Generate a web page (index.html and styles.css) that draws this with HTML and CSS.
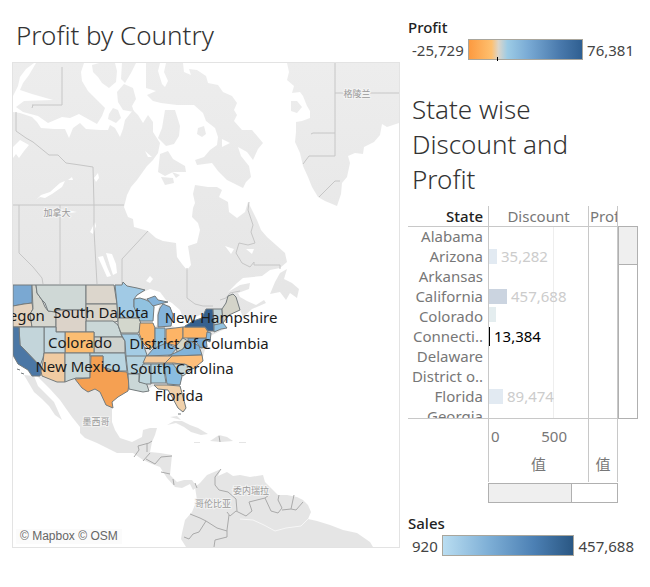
FILE: index.html
```html
<!DOCTYPE html>
<html lang="en">
<head>
<meta charset="utf-8">
<title>Profit by Country</title>
<link rel="stylesheet" href="styles.css">
</head>
<body>
<main class="dashboard">
  <section class="map-panel">
    <h1 class="title">Profit by Country</h1>
    <figure class="map">
      <svg viewBox="13 63 386 484" aria-label="Profit by state">
        <defs>
          <linearGradient id="land" gradientUnits="userSpaceOnUse" x1="0" y1="62" x2="0" y2="320">
            <stop offset="0" stop-color="#ededed"/><stop offset="1" stop-color="#e5e5e5"/>
          </linearGradient>
        </defs>
        <g class="land">
          <!-- North American mainland -->
          <path d="M13 112L20 113 32 117 37 122 41 128 54 129 65 129 69 138 73 128 80 123 86 129 100 130 108 130 110 125 115 128 120 137 123 129 125 120 133 110 138 115 143 123 148 115 153 122 153 132 160 143 158 153 153 160 147 166 142 173 137 180 131 187 127 195 124 207 128 217 133 219 134 227 148 231 156 238 163 241 176 243 177 257 182 264 187 270 191 265 188 246 197 243 200 230 198 223 192 217 193 208 195 203 193 194 195 185 208 187 217 187 222 190 219 197 228 202 229 212 237 218 245 212 248 202 257 220 261 230 267 237 285 253 287 262 280 268 270 270 262 276 243 278 237 283 228 292 240 285 250 283 249 289 238 293 240 297 247 301 256 305 264 300 266 303 252 309 243 317 240 310 229 315 222 323 227 328 210 336 206 345 203 357 202 362 190 370 183 376 180 385 183 397 186 408 184 412 180 409 173 397 168 389 158 388 153 386 145 391 133 390 128 390 118 397 112 402 112 413 112 422 115 430 120 438 132 442 142 437 143 430 150 428 157 428 155 435 152 442 150 452 160 453 172 455 171 465 170 475 177 482 184 480 192 480 197 487 193 490 190 484 182 488 175 487 167 478 160 467 152 464 143 460 133 453 117 453 97 443 85 438 80 433 80 427 72 417 67 410 60 400 50 389 42 381 35 374 28 370 18 364 13 357Z"/>
          <path d="M24 375L34 376 38 386 46 394 54 402 62 420 55 415 49 406 42 399 34 392Z"/>
          <!-- Arctic islands -->
          <path d="M13 63H34L26 69 20 77 18 86 13 96Z"/>
          <path d="M36 63H84L81 72 82 81 88 91 97 100 105 108 102 116 97 124 88 119 79 114 70 118 62 117 48 123 38 116 23 112 16 107 24 101 53 100 32 94 20 90 23 83 29 75Z"/>
          <path d="M92 65L99 63H115L117 71 116 82 109 88 102 83 98 77 93 72Z"/>
          <path d="M122 63H136L131 73 125 83 121 79Z"/>
          <path d="M124 84L133 88 136 99 132 106 134 112 123 110 118 102 117 92Z"/>
          <path d="M109 114L113 108 118 110 121 118 116 123 108 119Z"/>
          <path d="M146 63H160L158 71 162 84 165 87 168 81 164 72 166 63H183L184 72 191 75 189 69 197 70 206 76 208 83 218 85 223 92 232 96 237 103 234 110 237 115 234 121 242 130 252 130 263 143 258 149 253 160 247 152 238 147 241 156 249 166 251 177 246 182 243 188 235 184 227 180 218 171 212 163 197 165 195 160 204 157 210 150 217 145 218 137 215 128 206 121 203 113 194 105 184 105 177 105 161 103 153 101 147 95 156 91 146 88Z"/>
          <path d="M165 110L175 110 180 126 179 136 174 144 166 146 158 138 162 128Z"/>
          <path d="M160 154L168 151 173 159 185 166 186 172 173 172 165 176 158 172Z"/>
          <path d="M198 128L204 126 206 134 202 137 197 134Z"/>
          <path d="M161 177L173 178 174 183 165 185Z"/>
          <path d="M172 172L180 175 176 178Z"/>
          <path d="M203 84L198 87 202 90Z"/>
          <path d="M270 294L275 282 280 273 287 269 284 279 292 283 299 289 297 298 290 293 286 300 280 292Z"/>
          <!-- Greenland -->
          <path d="M287 63L289 72 287 80 294 86 292 93 300 92 303 96 307 106 310 111 310 118 302 121 296 122 296 132 295 142 300 153 303 166 308 177 312 187 318 197 325 201 337 206 341 194 342 183 347 177 350 163 348 156 355 153 363 154 364 147 374 142 380 135 382 124 387 127 399 123V63Z"/>
          <path d="M291 101L297 101 302 107 297 113 291 111Z"/>
          <!-- Caribbean -->
          <path d="M167 425L174 421 182 421 190 425 198 428 208 434 201 435 191 432 184 427 176 423Z"/>
          <path d="M210 441L219 435 227 437 233 441 221 442Z"/>
          <path d="M194 442H200V443H194ZM239 442H246V443H239ZM170 417L181 420 177 416Z"/>
          <!-- South America -->
          <path d="M186 547L181 539 182 533 185 520 192 512 197 500 195 487 200 483 207 475 221 469 218 476 227 472 233 476 240 475 250 477 263 475 265 482 278 495 287 495 297 497 303 500 308 505 311 512 308 519 317 521 330 525 343 530 357 533 370 542 373 547Z"/>
        </g>
        <!-- Lakes -->
        <g class="water">
          <path d="M36 200L41 195 50 192 60 183 65 181 62 187 52 194 45 198 40 197Z"/>
          <path d="M13 147L20 140 29 145 24 151 19 158 16 154 13 158Z"/>
          <path d="M94 178L98 173 99 178 96 182Z"/>
          <path d="M95 222L90 232 93 234 96 226ZM98 257L103 256 107 267 111 276 107 277 103 268ZM106 253L112 254 116 264 117 273 113 275 110 266ZM66 210L77 212 70 213Z"/>
          <path d="M72 177L68 180 73 180ZM145 151L152 157 148 157ZM222 139L230 143 222 147ZM225 246L234 249 231 254ZM246 249L254 249 252 254Z"/>
          <path d="M146 281L150 276 153 279 150 283Z"/>
          <path d="M134 298L141 293 150 289 160 292 166 300 172 303 180 310 183 318 190 321 193 320 188 325 177 329 171 325 173 315 169 305 160 304 157 313 157 325 153 328 152 316 155 306 158 301 147 298 140 298Z"/>
          <path d="M190 319L200 315 206 315 203 319 192 322Z"/>
        </g>
        <path class="river" d="M240 519L253 520 264 525 275 531 286 528 301 526 308 519"/>
        <g class="borders">
          <path d="M62 67V105H32M32 108L33 105M16 112V131L26 138 33 142 49 155H58L66 163 80 165 93 167 94 205 94 230 97 284M13 205H124M19 205V253L33 267 42 278 43 284M60 205V284M148 231L122 259V284M187 268V298L195 304 203 306 213 306M335 63V156H309L303 164M311 134L313 133H335M335 93H399M319 197L335 181H340"/>
          <path d="M249 202L248 210 253 225 251 232 255 243 248 245 239 243 236 253 242 263 250 267 254 262 254 265H280V269M220 300L226 298 230 293 240 291"/>
        </g>
        <g class="borders borders-dark">
          <path d="M134 457L139 450 138 446 149 443 152 441M147 443V452M143 461L150 453M146 459L155 464M155 464L161 457 172 456M161 472L170 474M173 479L174 485M195 483L197 488M219 436L220 442"/>
          <path d="M221 469L215 477 215 485 219 490 228 492 236 499 237 511M190 514L200 518 206 521 217 528 227 531M227 512L230 516 236 511 246 516 252 511 249 502 265 498 269 495M265 498L271 511 278 513 282 508 278 500 279 495M282 510L291 509 294 495M291 509L296 510 303 502M206 521L199 532 193 534 189 539 184 537M229 515L227 530 227 537 215 540 214 547"/>
        </g>
        <!-- States, coloured by profit -->
        <g class="states">
          <path fill="#7aa8d2" d="M13 285H32V303L24 304 13 306Z"/>
          <path fill="#e5d3bf" d="M13 306L24 304 32 303 33 309 30 314 32 327H13Z"/>
          <path fill="#d6d7d0" d="M32 285H36L37 293 42 300 45 307 48 311 56 312V327H32L30 314 33 309Z"/>
          <path fill="#cfd8d6" d="M36 285H86V310H56V312L48 311 45 303 42 300 37 293Z"/>
          <path fill="#dcd6cc" d="M86 285H114L117 304H86Z"/>
          <path fill="#d9d5ca" d="M86 304H117L118 321 115 322H86Z"/>
          <path fill="#dcd3c9" d="M56 310H86V332H56Z"/>
          <path fill="#cad7d7" d="M86 321H113L118 325 122 337H94V332H86Z"/>
          <path fill="#cfd2cd" d="M94 337H122L125 341V353H94Z"/>
          <path fill="#fbbd72" d="M65 332H94V353H65Z"/>
          <path fill="#c3d7df" d="M44 327H56V332H65V353H44Z"/>
          <path fill="#c3d5da" d="M19 327H44V353L43 358 40 366 20 345Z"/>
          <path fill="#4b77a5" d="M13 327H19L20 345 40 366 42 371 40 376H32L28 370 18 364 13 355Z"/>
          <path fill="#f0cba2" d="M44 353H65V382H57L42 376 41 371 43 362Z"/>
          <path fill="#c9d7d8" d="M65 353H90V378H76L70 380 65 382Z"/>
          <path fill="#b9d5e0" d="M90 353H125L127 371 115 371 103 367V356H90Z"/>
          <path fill="#f5a052" d="M91 356H103V367L108 370 115 371 127 372 129 383 128 391 118 397 112 402 113 408 106 405 100 392 95 389 88 392 82 388 75 379 90 378Z"/>
          <path fill="#a1cae5" d="M115 285H122L123 282 127 286 137 288 145 290 137 295 134 299 134 307 140 314V318H118L117 304Z"/>
          <path fill="#d3d7cd" d="M118 318H139L142 327 138 333H121L118 325Z"/>
          <path fill="#a4cce4" d="M121 334H138L143 344 147 355 145 357H126L125 341Z"/>
          <path fill="#b5d3df" d="M126 356H147L143 367 140 374H128Z"/>
          <path fill="#cad7d7" d="M128 374H139V382H146L149 391 143 392 129 389Z"/>
          <path fill="#bed5dc" d="M143 364H151V384H146L139 382 140 372Z"/>
          <path fill="#91c2e0" d="M134 299L140 298 146 300 152 303 154 307 153 321H140L134 307Z"/>
          <path fill="#fdb466" d="M140 323H153L155 328 155 343 150 350 143 343 139 333Z"/>
          <path fill="#84b3da" d="M147 299L155 296 158 300 168 302 160 304 153 306ZM160 308L163 304 170 307 173 315 171 326 158 327 158 315Z"/>
          <path fill="#91c2e0" d="M155 328H165V345L155 350Z"/>
          <path fill="#fdb466" d="M166 329L175 328 183 327V337L177 346 166 343Z"/>
          <path fill="#89b9dd" d="M147 356L153 349 166 343 177 348 171 355Z"/>
          <path fill="#d5d6c8" d="M176 346L183 338 188 341 182 350 177 352Z"/>
          <path fill="#80b3da" d="M168 356L177 352 183 349 190 341 199 346 202 355Z"/>
          <path fill="#79aad4" d="M188 338H206L207 347 201 348 196 342 188 341Z"/>
          <path fill="#f4c99b" d="M146 356H172L166 363H143Z"/>
          <path fill="#fdbf7b" d="M172 356L202 355 203 361 193 369 187 365 174 363H165Z"/>
          <path fill="#c8d7d7" d="M172 364H185L192 369 183 376Z"/>
          <path fill="#8abde0" d="M164 364H173L182 376 180 385 167 384Z"/>
          <path fill="#aacfdf" d="M151 364H163L166 383H151Z"/>
          <path fill="#fdb466" d="M183 327H205L208 332 206 338H183Z"/>
          <path fill="#36618f" d="M185 326L193 321 202 318 206 309H213L214 331 208 331 205 327H185Z"/>
          <path fill="#c2d5d9" d="M213 309H222L223 324 214 325Z"/>
          <path fill="#d4d4c9" d="M222 309L226 303 228 296 233 294 236 297 240 310 229 315 223 323Z"/>
          <path fill="#91c2e0" d="M214 325L223 323 227 328 221 329 214 332Z"/>
          <path fill="#89b9dd" d="M207 332L211 333 210 342 206 340Z"/>
          <path fill="#f0d0aa" d="M154 385L167 385 180 386 183 397 186 408 183 412 178 408 172 397 168 390 158 389Z"/>
          <path fill="none" d="M17 369L20 370M21 373L24 374M181 414L178 414"/>
        </g>
        <g class="places">
          <text x="357" y="97">格陵兰</text>
          <text x="57" y="216">加拿大</text>
          <text x="96" y="425">墨西哥</text>
          <text x="251" y="494">委内瑞拉</text>
          <text x="213" y="507">哥伦比亚</text>
        </g>
        <g class="names">
          <text x="18" y="321">Oregon</text>
          <text x="101" y="318">South Dakota</text>
          <text x="80" y="348">Colorado</text>
          <text x="78" y="372">New Mexico</text>
          <text x="221" y="323">New Hampshire</text>
          <text x="199" y="349">District of Columbia</text>
          <text x="182" y="374">South Carolina</text>
          <text x="179" y="401">Florida</text>
        </g>
      </svg>
      <figcaption class="credit">© Mapbox © OSM</figcaption>
    </figure>
  </section>

  <aside class="side">
    <section class="legend">
      <h2 class="legend-title">Profit</h2>
      <div class="legend-row"><span>-25,729</span><div class="ramp ramp-profit"></div><span>76,381</span></div>
    </section>

    <section class="chart">
      <h2 class="title">State wise Discount and Profit</h2>
      <div class="viz">
        <div class="viewport">
          <table>
            <thead>
              <tr><th class="state">State</th><th class="discount">Discount</th><th class="profit">Profit</th></tr>
            </thead>
            <tbody>
              <tr><th>Alabama</th><td class="plot"></td><td></td></tr>
              <tr><th>Arizona</th><td class="plot"><div class="mark"><i class="bar pale" style="width:8px"></i>35,282</div></td><td></td></tr>
              <tr><th>Arkansas</th><td class="plot"></td><td></td></tr>
              <tr><th>California</th><td class="plot"><div class="mark"><i class="bar deep" style="width:18px"></i>457,688</div></td><td></td></tr>
              <tr><th>Colorado</th><td class="plot"><div class="mark"><i class="bar mint" style="width:7px"></i></div></td><td></td></tr>
              <tr><th>Connecti..</th><td class="plot"><div class="mark selected"><i class="bar" style="width:1px"></i>13,384</div></td><td></td></tr>
              <tr><th>Delaware</th><td class="plot"></td><td></td></tr>
              <tr><th>District o..</th><td class="plot"></td><td></td></tr>
              <tr><th>Florida</th><td class="plot"><div class="mark"><i class="bar pale" style="width:14px"></i>89,474</div></td><td></td></tr>
              <tr><th>Georgia</th><td class="plot"></td><td></td></tr>
            </tbody>
          </table>
        </div>
        <div class="track track-y"><div class="thumb"></div></div>
        <div class="axes">
          <div class="axis"><div class="ticks"><span>0</span><span>500</span></div><div class="unit">值</div></div>
          <div class="axis"><div class="ticks"></div><div class="unit">值</div></div>
        </div>
        <div class="track track-x"><div class="thumb"></div></div>
      </div>
    </section>

    <section class="legend">
      <h2 class="legend-title">Sales</h2>
      <div class="legend-row"><span>920</span><div class="ramp ramp-sales"></div><span>457,688</span></div>
    </section>
  </aside>
</main>
</body>
</html>
```
FILE: styles.css
```css
* { box-sizing: border-box; }

body {
  margin: 0;
  background: #fff;
  color: #444;
  font: 400 15px/20px "Noto Sans", "Noto Sans CJK SC", sans-serif;
}

h1, h2, figure { margin: 0; }

.dashboard {
  display: grid;
  grid-template-columns: minmax(0, 1fr) 230px;
  gap: 8px;
  padding: 18px 12px;
}

.title {
  padding: 0 4px;
  color: #333;
  font-size: 26px;
  font-weight: 300;
  line-height: 35px;
}

.map-panel .title { margin-bottom: 9px; }

.map {
  position: relative;
  border: 1px solid #e3e3e3;
}

.map svg { display: block; width: 100%; }

.land { fill: url(#land); }
.water { fill: #fff; }
.river { fill: none; stroke: #f6f6f6; }
.borders { fill: none; stroke: #c6c6c6; stroke-width: 1; }
.borders-dark { stroke: #aaa; }
.states { stroke: #747b7d; stroke-width: 1; stroke-linejoin: round; }

.places {
  fill: #999;
  stroke: #f3f3f3;
  stroke-width: 2;
  paint-order: stroke;
  font: 9px "Noto Sans CJK SC", sans-serif;
  text-anchor: middle;
}

.names {
  fill: #1b1b1b;
  font-size: 15px;
  text-anchor: middle;
}

.credit {
  position: absolute;
  left: 3px;
  bottom: 3px;
  padding: 0 4px;
  background: rgba(250, 250, 250, .8);
  color: #666;
  font: 12px/15px "Liberation Sans", sans-serif;
}

.side { margin-top: -1px; }

.legend-title {
  margin-bottom: 2px;
  color: #222;
  font-size: 15px;
  font-weight: 500;
  line-height: 20px;
}

.legend-row {
  display: flex;
  align-items: center;
  gap: 4px;
  padding: 0 4px;
}

.ramp {
  position: relative;
  flex: 1;
  height: 21px;
  border: 1px solid #a9a69c;
}

.ramp-profit {
  background: linear-gradient(90deg, #fc9a40, #fec06f 20%, #dcd5c9 26%, #9ccbe5 34%, #7aabd5 52%, #4a7aad 80%, #2f5f91);
}

.ramp-profit::after {
  content: "";
  position: absolute;
  left: 25%;
  bottom: -2px;
  width: 1px;
  height: 4px;
  background: #000;
}

.ramp-sales {
  background: linear-gradient(90deg, #b9ddf1, #7eafd6 35%, #4c80b4 70%, #2a5783);
}

.chart { margin: 32px 0 10px; }

.viz {
  display: grid;
  grid-template-columns: 210px 20px;
  margin-top: 9px;
}

.viewport {
  height: 213px;
  overflow: hidden;
  border-right: 1px solid #c8c8c8;
  border-bottom: 1px solid #c8c8c8;
}

table {
  width: 100%;
  table-layout: fixed;
  border-collapse: separate;
  border-spacing: 0;
}

th, td { height: 20px; padding: 0; vertical-align: top; }
td, thead th + th { border-left: 1px solid #c8c8c8; }
thead th { height: 21px; border-bottom: 1px solid #c8c8c8; }

th {
  padding-right: 5px;
  overflow: hidden;
  color: #777;
  font-weight: 400;
  line-height: 18px;
  text-align: right;
  white-space: nowrap;
}

thead th { line-height: 20px; }

.state { width: 80px; color: #222; font-weight: 500; }
.discount { width: 100px; padding: 0; text-align: center; }
.profit { padding: 0 0 0 1px; text-align: left; }

.plot { background: linear-gradient(#eee, #eee) 64px 0 / 1px 100% no-repeat; }

.mark {
  display: flex;
  align-items: center;
  gap: 4px;
  color: #ccc;
  line-height: 19px;
}

.bar { height: 15px; background: #000; }
.pale { background: #e2eaf2; }
.deep { background: #cbd4e0; }
.mint { background: #e4edef; }
.selected { color: #000; }
.selected .bar { height: 19px; }

.track {
  border: 1px solid #b0b0b0;
  background: #fff;
}

.thumb { background: #efefef; }

.track-y { margin: 20px 0 0 0; }
.track-y .thumb { height: 38px; border-bottom: 1px solid #b0b0b0; }

.axes {
  display: grid;
  grid-template-columns: 100px 1fr;
  margin-left: 80px;
  border-right: 1px solid #c8c8c8;
  color: #777;
}

.axis {
  padding-top: 7px;
  border-left: 1px solid #c8c8c8;
}

.ticks {
  display: flex;
  justify-content: space-between;
  height: 20px;
  padding: 0 21px 0 2px;
}

.unit { padding: 8px 0; text-align: center; }

.track-x {
  grid-column: 1 / -1;
  height: 20px;
  margin: 1px 20px 0 80px;
}

.track-x .thumb {
  width: 65%;
  height: 100%;
  border-right: 1px solid #b0b0b0;
}
```
